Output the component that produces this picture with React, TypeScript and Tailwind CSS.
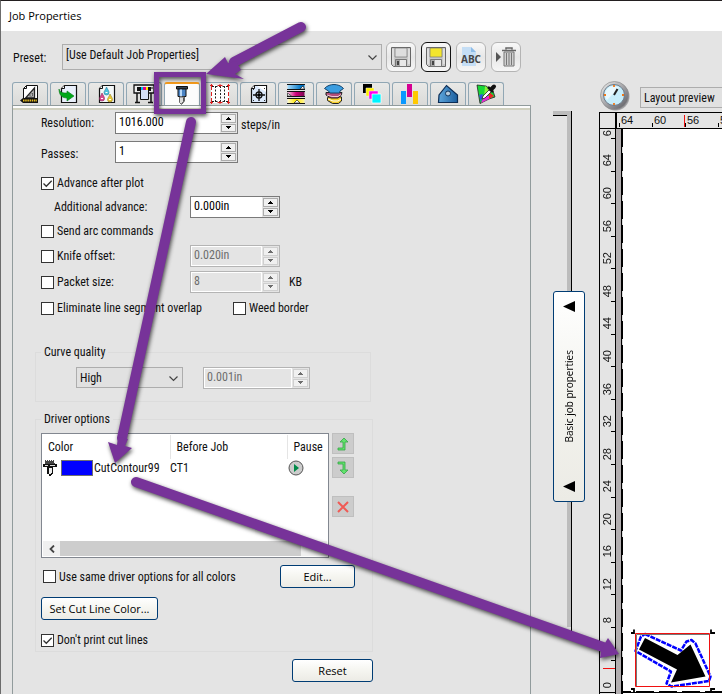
import { ReactNode, useState } from 'react';
import clsx from 'clsx';

const RULER_LEFT = ['64', '60', '56', '52', '48', '44', '40', '36', '32', '28', '24', '20', '16', '12', '8', '4', '0'];
const RULER_TOP = ['64', '60', '56', '52'];

interface SpinBoxProps {
  id: string;
  label?: string;
  defaultValue: string;
  disabled?: boolean;
  className?: string;
}

function SpinBox({ id, label, defaultValue, disabled = false, className }: SpinBoxProps) {
  const arrow = clsx(
    'flex flex-1 items-center justify-center border bg-[#f0f0f0]',
    disabled ? 'border-[#cfcfcf] text-[#6d6d6d]' : 'border-[#acacac] text-black'
  );

  return (
    <div
      className={clsx(
        'flex h-[22px] shrink-0 border',
        disabled ? 'border-[#b4b4b4] bg-[#e4e4e4]' : 'border-[#7a7a7a] bg-white',
        className
      )}
    >
      <input
        id={id}
        aria-label={label}
        defaultValue={defaultValue}
        disabled={disabled}
        className={clsx('min-w-0 flex-1 pb-[2px] outline-none', disabled ? 'border border-white pl-[2px] text-[#6d6d6d]' : 'pl-[3px] text-black')}
      />
      <div className="flex w-[17px] flex-col gap-px bg-[#e4e4e4] p-px">
        <button type="button" aria-label="Increase" disabled={disabled} className={arrow}>
          <svg viewBox="0 0 5 3" className="h-[3px] w-[5px]" shapeRendering="crispEdges" fill="currentColor">
            <path d="M2 0h1v1h1v1h1v1H0V2h1V1h1z" />
          </svg>
        </button>
        <button type="button" aria-label="Decrease" disabled={disabled} className={arrow}>
          <svg viewBox="0 0 5 3" className="h-[3px] w-[5px]" shapeRendering="crispEdges" fill="currentColor">
            <path d="M0 0h5v1H4v1H3v1H2V2H1V1H0z" />
          </svg>
        </button>
      </div>
    </div>
  );
}

interface CheckProps {
  label: string;
  defaultChecked?: boolean;
  className?: string;
}

function Check({ label, defaultChecked = false, className }: CheckProps) {
  return (
    <label className={clsx('flex items-center gap-[3px] whitespace-nowrap', className)}>
      <span className="relative h-[13px] w-[13px]">
        <input
          type="checkbox"
          defaultChecked={defaultChecked}
          className="peer block h-[13px] w-[13px] appearance-none border border-[#333] bg-white"
        />
        <svg
          viewBox="0 0 13 13"
          className="pointer-events-none absolute inset-0 hidden h-[13px] w-[13px] peer-checked:block"
          fill="none"
          stroke="#333"
          strokeWidth="1.3"
        >
          <path d="M2.5 6.5l2.8 2.8 5.4-5.6" />
        </svg>
      </span>
      {label}
    </label>
  );
}

interface DropDownProps {
  id: string;
  label?: string;
  value: string;
  className?: string;
}

function DropDown({ id, label, value, className }: DropDownProps) {
  return (
    <div className={clsx('relative border border-[#adadad] bg-[#e1e1e1]', className)}>
      <select id={id} aria-label={label} defaultValue={value} className="h-full w-full appearance-none pl-[3px] pr-5 outline-none">
        <option>{value}</option>
      </select>
      <svg viewBox="0 0 9 6" className="pointer-events-none absolute top-1/2 right-1 -mt-[2px] h-[6px] w-[9px]" fill="none" stroke="#444" strokeWidth="1.2">
        <path d="M.5.5l4 4 4-4" />
      </svg>
    </div>
  );
}

function PushButton({ children, className }: { children: ReactNode; className?: string }) {
  return (
    <button
      type="button"
      className={clsx(
        "rounded-[3px] border border-[#003c74] bg-gradient-to-b from-white via-[#f5f5f0] to-[#ecebe5] font-['Open_Sans','Noto_Sans',sans-serif] text-[11px] whitespace-nowrap text-black",
        className
      )}
    >
      {children}
    </button>
  );
}

function FloppyIcon({ color }: { color: string }) {
  return (
    <svg viewBox="0 0 20 20" className="h-5 w-5">
      <path d="M.5.5h19v19h-17l-2-2z" fill="#c9c9c9" stroke="#666" />
      <path d="M4 1h12v9H4z" fill={color} stroke="#777" strokeWidth=".7" />
      <path d="M4.5 12.5h11v7h-11z" fill="#a9a9a9" stroke="#777" />
      <path d="M9 13h6v6H9z" fill="#e8e8e8" />
      <path d="M6 14h2v4H6z" fill="#444" />
      <path d="M2 2v15M18 2v15" stroke="#f4f4f4" />
    </svg>
  );
}

// sheet with a folded top left corner, shared by several tabs
function Sheet({ fill = '#fff' }: { fill?: string }) {
  return (
    <>
      <path d="M6.5 1.5h12v17h-15v-14z" fill={fill} stroke="#111" strokeWidth="1.2" />
      <path d="M6.5 1.5v3h-3" fill="#fff" stroke="#111" />
    </>
  );
}

const TABS: { name: string; icon: ReactNode }[] = [
  {
    name: 'Job size',
    icon: (
      <>
        <path d="M6.5 1.5h11v14h-14v-11z" fill="#fff" stroke="#111" />
        <path d="M6.5 1.5v3h-3" fill="none" stroke="#111" />
        <path d="M14.5 4v10h-9z" fill="#bbb" stroke="#222" strokeWidth="1.3" />
        <path d="M12.5 9v3h-3z" fill="#fff" stroke="#333" strokeWidth=".7" />
        <path d="M0 16.5l3-2.5h15v5H3z" fill="#111" />
        <path d="M3 16.5h14" stroke="#e8bc20" strokeWidth="2" strokeDasharray="1.5 .7" />
      </>
    ),
  },
  {
    name: 'Workflow',
    icon: (
      <>
        <Sheet fill="#e9f0fb" />
        <path d="M1 5c1 4 5 4 8 4V7l7 5-7 5v-3c-5 0-8-3-8-9z" fill="#00a818" stroke="#087818" strokeWidth=".6" />
      </>
    ),
  },
  {
    name: 'Color management',
    icon: (
      <>
        <Sheet fill="#f4f8f8" />
        <path d="M10.500 3C12 6 13 7 13 8.500a2.500 2.500 0 0 1-5 0C8 7 9.500 6 10.500 3z" fill="#4bc1dd" stroke="#277b98" strokeWidth=".6" />
        <path d="M6 9c1.500 3 2.500 4 2.500 5.500a2.500 2.500 0 0 1-5 0C3.500 13 5 12 6 9z" fill="#db4a8e" stroke="#83245b" strokeWidth=".6" />
        <path d="M14 10c1.500 3 2.500 4 2.500 5.500a2.500 2.500 0 0 1-5 0C11.500 14 13 13 14 10z" fill="#e8c933" stroke="#94802c" strokeWidth=".6" />
        <path d="M9.500 8h2v1h-2zM5 14h2v1H5zM13 15h2v1h-2z" fill="#fff" />
      </>
    ),
  },
  {
    name: 'Printer',
    icon: (
      <>
        <path d="M0 1h20v8H0z" fill="#eee" stroke="#111" strokeWidth="1.3" />
        <path d="M3 9v9M1 18.500h5M17 9v9M14 18.500h5" stroke="#111" strokeWidth="1.5" />
        <path d="M3 3h14v4H3z" fill="#111" />
        <path d="M6.500 5h8v10.500h-8z" fill="#d4dff5" stroke="#111" />
        <path d="M7 3h2v3H7z" fill="#00bfef" />
        <path d="M9 3h3v3H9z" fill="#e0008c" />
        <path d="M12 3h2v3h-2z" fill="#ffe600" />
        <path d="M18 3v2" stroke="#111" />
      </>
    ),
  },
  {
    name: 'Cutter',
    icon: (
      <>
        <path d="M4.500 1.500h11v2.500h-11z" fill="#345" stroke="#111" />
        <path d="M6 4h8v7.500H6z" fill="#4b84c4" stroke="#111" />
        <path d="M8 4.500h2v7H8z" fill="#bad9f6" />
        <path d="M7.500 12h5v4l-3 3.500-2-2z" fill="#ddd" stroke="#666" />
        <path d="M11.500 12.500v4l-2 2.500" stroke="#555" fill="none" />
      </>
    ),
  },
  {
    name: 'Tiling',
    icon: (
      <>
        <path d="M1 1h18v18H1z" fill="#fff" />
        <path d="M5.500 2v16M10.500 2v16M14.500 2v16M2 2.500h16M2 17.500h16" stroke="#222" strokeDasharray="2 1.500" fill="none" />
        <path
          d="M0 1.500h3M1.500 0v6M1.500 8v4M1.500 14v6M17 1.500h3M18.500 0v6M18.500 8v4M18.500 14v6M0 18.500h3M17 18.500h3M7.500 1.500h5M7.500 18.500h5M10 0v3M10 17v3"
          stroke="#e02020"
          fill="none"
        />
      </>
    ),
  },
  {
    name: 'Registration marks',
    icon: (
      <>
        <Sheet fill="#dbe9fb" />
        <path d="M9 2h9v6z" fill="#fff" />
        <circle cx="11" cy="11" r="3" fill="none" stroke="#111" strokeWidth="1.3" />
        <path d="M11 5v12M5 11h12" stroke="#111" strokeWidth="1.300" />
        <circle cx="11" cy="11" r="1.500" />
        <path d="M5 5.500h1M16 4.500h1M5 16.500h1M16 16.500h1" stroke="#333" />
      </>
    ),
  },
  {
    name: 'Color adjustment',
    icon: (
      <>
        <path d="M1.500 1h17v4.500h-17z" fill="url(#toneCyan)" />
        <path d="M1.500 8h17v4.500h-17z" fill="url(#toneMagenta)" />
        <path d="M1.500 15h17v4.500h-17z" fill="url(#toneYellow)" />
        <path d="M1 .5h18M1 5.500h18M1 7.500h18M1 12.500h18M1 14.500h18M1 19.500h18" stroke="#111" />
        <path d="M14 5l3-3 1.500 3zM1.500 12V9l4 3zM8 19l3-3 3 3z" fill="#fff" stroke="#222" strokeWidth=".7" />
      </>
    ),
  },
  {
    name: 'Layers',
    icon: (
      <>
        <path d="M3.500 13.500v3l5 3h6l3-2.500v-4l-9-1z" fill="#f5cd28" stroke="#222" />
        <path d="M4 15l5 2h5l3-2" fill="none" stroke="#fff" />
        <path d="M2 8.500v2.500l5 3h7l3-2.500 1-3z" fill="#b34e78" stroke="#222" />
        <path d="M3 11l5 1.500h6l3-2" fill="none" stroke="#eec8d6" />
        <path d="M.5 4.500C3 1.500 7 .5 10 .5s7 1 9.500 4L16 7l-.5 2H6L4.500 7z" fill="#3b9de0" stroke="#154268" />
      </>
    ),
  },
  {
    name: 'Separations',
    icon: (
      <>
        <path d="M1 0h9v9H1z" fill="#000" />
        <path d="M4 4h8v8H4z" fill="#ffef00" stroke="#eee" strokeWidth=".5" />
        <path d="M7 7h9v8H7z" fill="#ff00f0" stroke="#eee" strokeWidth=".5" />
        <path d="M10 10h9v9h-9z" fill="#00f4ff" stroke="#fff" strokeWidth=".7" />
      </>
    ),
  },
  {
    name: 'Ink levels',
    icon: (
      <>
        <path d="M1 7h5v13H1z" fill="#0a98ff" />
        <path d="M7 0h5v13H7z" fill="#d60093" />
        <path d="M13 7h5v13h-5z" fill="#ffc800" />
      </>
    ),
  },
  {
    name: 'Finishing',
    icon: (
      <>
        <path d="M.5 18.500L1 11l7.500-9.500 11 9.500v7.500z" fill="url(#tag)" stroke="#0c2d55" strokeWidth="1.200" />
        <circle cx="10" cy="9.500" r="2.500" fill="#b6ccde" stroke="#12365f" />
      </>
    ),
  },
  {
    name: 'Color picker',
    icon: (
      <>
        <path d="M1 1l9 1 7 5 2 6-6 2-9 4.500z" fill="#18d838" stroke="#222" strokeWidth=".8" />
        <path d="M9 2l6 4-7 8z" fill="#8af23a" />
        <path d="M3 11l4-1-2 8z" fill="#2e50e8" />
        <path d="M8 12l9 0-4 3-8 4z" fill="#e628d2" />
        <path d="M13 8l5 4-5 3z" fill="#ef2525" />
        <path d="M6 15l1-3 7-7 2 2-7 7z" fill="#fff" stroke="#222" strokeWidth=".8" />
        <path d="M12 3l5 5" stroke="#111" strokeWidth="2.500" />
        <path d="M15 5.500l3-3" stroke="#111" strokeWidth="4" strokeLinecap="round" />
      </>
    ),
  },
];

function Toolbar() {
  const button = 'flex h-[30px] w-[30px] items-center justify-center rounded-[6px] bg-gradient-to-b from-[#f8f8f8] via-[#e7e7e7] to-[#f6f6f6] border';

  return (
    <div className="flex items-center pt-[11px]">
      <label htmlFor="preset" className="w-[49px] pt-[2px] pl-[13px]">Preset:</label>
      <DropDown id="preset" value="[Use Default Job Properties]" className="ml-[13px] h-[26px] w-[320px] pb-1" />
      <div className="ml-1 flex gap-[5px]">
        <button type="button" aria-label="Save preset" className={clsx(button, 'border-[#b4b4b4]')}>
          <FloppyIcon color="#dedede" />
        </button>
        <button type="button" aria-label="Save preset as" className={clsx(button, 'border-[#111]')}>
          <FloppyIcon color="#f3e52d" />
        </button>
        <button type="button" aria-label="Rename preset" className={clsx(button, 'border-[#b4b4b4]')}>
          <svg viewBox="0 0 20 20" className="h-5 w-5 overflow-visible">
            <path d="M1 0h9l5 5v14H1z" fill="#c5def5" />
            <path d="M10 0v5h5z" fill="#8dbce8" />
            <text x="10" y="16" textAnchor="middle" fontSize="10" fontWeight="700" fontFamily="Open Sans, sans-serif" fill="#454545">ABC</text>
          </svg>
        </button>
        <button type="button" aria-label="Delete preset" className={clsx(button, 'border-[#b4b4b4]')}>
          <svg viewBox="0 0 22 20" className="h-5 w-[22px]">
            <path d="M1 5l5 5-5 5z" fill="#555" />
            <path d="M9 5h10v14H9z" fill="#d0d0d0" stroke="#777" />
            <path d="M7 3.500h14M11 2.500V1h6v1.500" stroke="#666" strokeWidth="1.500" fill="none" />
            <path d="M11.500 6v12M14 6v12M16.500 6v12" stroke="#777" />
          </svg>
        </button>
      </div>
    </div>
  );
}

function TabStrip({ active, onSelect }: { active: number; onSelect: (index: number) => void }) {
  return (
    <div role="tablist" className="mt-[10px] ml-3 flex gap-[2px]">
      {TABS.map((tab, index) => (
        <button
          key={tab.name}
          type="button"
          role="tab"
          aria-label={tab.name}
          aria-selected={index === active}
          onClick={() => onSelect(index)}
          className={clsx(
            'flex h-[23px] w-9 items-center justify-center rounded-t-[3px] border border-b-0',
            index === active
              ? 'border-[#91a7b4] border-t-2 border-t-[#f49b1c] bg-[#fcfcfc]'
              : 'border-[#91a7b4] bg-gradient-to-b from-[#e9e9e7] to-[#dadad8]'
          )}
        >
          <svg viewBox="0 0 20 20" className="h-5 w-5 shrink-0 overflow-visible">{tab.icon}</svg>
        </button>
      ))}
    </div>
  );
}

function GradientDefs() {
  return (
    <svg aria-hidden="true" className="absolute h-0 w-0">
      <defs>
        <linearGradient id="toneCyan">
          <stop offset="0" stopColor="#a9dcfa" />
          <stop offset=".8" stopColor="#0074c4" />
        </linearGradient>
        <linearGradient id="toneMagenta">
          <stop offset="0" stopColor="#f6cce2" />
          <stop offset=".5" stopColor="#d0007c" />
          <stop offset="1" stopColor="#7b0650" />
        </linearGradient>
        <linearGradient id="toneYellow">
          <stop offset="0" stopColor="#fffbd0" />
          <stop offset=".5" stopColor="#ffe600" />
          <stop offset="1" stopColor="#fff59a" />
        </linearGradient>
        <linearGradient id="tag">
          <stop offset="0" stopColor="#5ea6dc" />
          <stop offset="1" stopColor="#1c5f9e" />
        </linearGradient>
        <linearGradient id="rim" x1="0" y1="0" x2="1" y2="1">
          <stop offset="0" stopColor="#f2f2f2" />
          <stop offset="1" stopColor="#55555c" />
        </linearGradient>
      </defs>
    </svg>
  );
}

function ColorList() {
  return (
    <div className="flex h-[125px] w-[288px] flex-col border border-[#828790] bg-white p-px">
      <table className="w-full table-fixed text-left">
        <thead>
          <tr className="h-6">
            <th className="w-[127px] pl-[5px] font-normal">Color</th>
            <th className="w-[117px] border-l border-[#e5e5e5] pl-[6px] font-normal">Before Job</th>
            <th className="border-l border-[#e5e5e5] pl-[6px] font-normal">Pause</th>
          </tr>
        </thead>
        <tbody>
          <tr className="h-[17px]">
            <td>
              <span className="flex items-center whitespace-nowrap">
                <svg viewBox="0 0 14 16" className="h-4 w-[14px]" shapeRendering="crispEdges">
                  <path d="M2 0h1v1h1V0h1v1h1V0h1v1h1V0h1v1h1V0h1v3h1v2H2z" fill="#444" />
                  <path d="M0 4h14v3H0z" fill="#111" />
                  <path d="M2 5h3v1H2zM7 5h5v1H7z" fill="#ddd" />
                  <path d="M4 7h6v6l-3 3H6v-2H4z" fill="#111" />
                  <path d="M6 8h3v4l-2 2H6z" fill="#eee" />
                </svg>
                <span className="ml-[4px] h-4 w-8 border border-[#707070] bg-[#0000ff]" />
                <span className="ml-px">CutContour99</span>
              </span>
            </td>
            <td>CT1</td>
            <td className="pl-px">
              <svg viewBox="0 0 16 16" className="h-4 w-4">
                <circle cx="8" cy="8" r="7" fill="#ccc" stroke="#555" />
                <path d="M6 4l5 4-5 4z" fill="#008a48" />
              </svg>
            </td>
          </tr>
        </tbody>
      </table>
      <div className="mt-auto flex h-[15px] bg-[#f0f0f0]">
        <button type="button" aria-label="Scroll left" className="flex w-[17px] items-center justify-center">
          <svg viewBox="0 0 6 8" className="h-2 w-[6px]" fill="none" stroke="#444" strokeWidth="1.800">
            <path d="M5 .5L1.500 4 5 7.500" />
          </svg>
        </button>
        <div className="w-[241px] bg-[#cdcdcd]" />
      </div>
    </div>
  );
}

function DriverOptions() {
  const side = 'flex h-[21px] w-[22px] items-center justify-center border border-[#bfbfbf] bg-[#cccccc]';
  const turn = 'M1 11h5V5H3l4-4 4 4H8v8H1z';

  return (
    <fieldset className="mt-[9px] w-[338px] border border-[#dcdcdc] pb-px">
      <legend className="ml-[5px] px-[3px] leading-4">Driver options</legend>
      <div className="flex gap-[3px] pt-[6px] pl-[5px]">
        <ColorList />
        <div className="flex flex-col gap-[3px]">
          <button type="button" aria-label="Move up" className={side}>
            <svg viewBox="0 0 12 14" className="h-[14px] w-3">
              <path d={turn} fill="#62e36c" stroke="#35a548" strokeWidth=".8" />
            </svg>
          </button>
          <button type="button" aria-label="Move down" className={side}>
            <svg viewBox="0 0 12 14" className="h-[14px] w-3 -scale-y-100">
              <path d={turn} fill="#62e36c" stroke="#35a548" strokeWidth=".8" />
            </svg>
          </button>
          <button type="button" aria-label="Remove" className={clsx(side, 'mt-[15px]')}>
            <svg viewBox="0 0 12 12" className="h-3 w-3">
              <path d="M1 1l10 10M11 1L1 11" stroke="#f05a55" strokeWidth="2" />
            </svg>
          </button>
        </div>
      </div>
      <div className="mt-[7px] flex h-[23px] items-center justify-between pr-[17px] pl-[7px]">
        <Check label="Use same driver options for all colors" />
        <PushButton className="h-[23px] w-[75px]">Edit...</PushButton>
      </div>
      <PushButton className="mt-[9px] ml-[5px] block h-[23px] w-[117px]">Set Cut Line Color...</PushButton>
      <Check label="Don't print cut lines" defaultChecked className="mt-[10px] h-5 pl-[5px]" />
    </fieldset>
  );
}

function CutterPanel() {
  return (
    <div role="tabpanel" className="ml-3 flex-1 border-x border-t border-[#919b9c]">
      <div className="border-t-2 border-b-2 border-t-[#fcfcfc] border-b-[#d0d0bf]" />
      <form className="pl-[22px]" onSubmit={(e) => e.preventDefault()}>
        <div className="flex flex-col pt-[2px] pl-[6px]">
          <div className="flex h-[22px] items-center">
            <label htmlFor="resolution" className="w-[74px]">Resolution:</label>
            <SpinBox id="resolution" defaultValue="1016.000" className="w-[123px]" />
            <span className="pt-1 pl-[3px]">steps/in</span>
          </div>
          <div className="mt-[7px] flex h-[22px] items-center">
            <label htmlFor="passes" className="w-[74px] pt-1">Passes:</label>
            <SpinBox id="passes" defaultValue="1" className="w-[123px]" />
          </div>
          <Check label="Advance after plot" defaultChecked className="mt-2 h-6" />
          <div className="flex h-6 items-center">
            <label htmlFor="advance" className="w-[149px] pl-[13px]">Additional advance:</label>
            <SpinBox id="advance" defaultValue="0.000in" className="w-[90px]" />
          </div>
          <Check label="Send arc commands" className="h-6" />
          <div className="flex h-[26px] items-center">
            <Check label="Knife offset:" className="w-[149px]" />
            <SpinBox id="knife" label="Knife offset" defaultValue="0.020in" disabled className="w-[90px]" />
          </div>
          <div className="flex h-[26px] items-center">
            <Check label="Packet size:" className="w-[149px]" />
            <SpinBox id="packet" label="Packet size" defaultValue="8" disabled className="w-[90px]" />
            <span className="pl-[9px]">KB</span>
          </div>
          <div className="flex h-[26px] items-center">
            <Check label="Eliminate line segment overlap" className="w-[192px]" />
            <Check label="Weed border" />
          </div>
        </div>

        <fieldset className="mt-[23px] w-[336px] border border-[#dcdcdc] pb-3">
          <legend className="ml-[5px] px-[3px] leading-4">Curve quality</legend>
          <div className="flex gap-5 pt-[7px] pl-10">
            <DropDown id="quality" label="Curve quality" value="High" className="h-[21px] w-[107px]" />
            <SpinBox id="tolerance" label="Curve tolerance" defaultValue="0.001in" disabled className="w-[107px]" />
          </div>
        </fieldset>

        <DriverOptions />

        <div className="mt-[7px] flex w-[338px] justify-end">
          <PushButton className="h-[23px] w-[81px]">Reset</PushButton>
        </div>
      </form>
    </div>
  );
}

function Splitter() {
  return (
    <div className="relative mt-[80px] ml-[22px] mb-[62px] w-[32px] shrink-0">
      <div className="mr-[13px] flex h-full flex-col border-r border-b border-black pb-1">
        <div className="h-[5px] shrink-0 border-b border-black bg-[#bcbcbc]" />
        <div className="-mt-px ml-auto w-1 flex-1 bg-[#bcbcbc]" />
      </div>
      <button
        type="button"
        className="absolute top-[180px] left-0 flex h-[211px] w-8 flex-col items-center justify-between rounded-[3px] border border-[#003c74] bg-gradient-to-b from-white via-[#f3f3ee] to-[#ecebe5] py-[9px] text-black"
      >
        <svg viewBox="0 0 12 11" className="h-[11px] w-3"><path d="M0 5.500L12 0v11z" /></svg>
        <span className="rotate-180 font-['Open_Sans','Noto_Sans',sans-serif] text-[10px] leading-3 [writing-mode:vertical-rl]">Basic job properties</span>
        <svg viewBox="0 0 12 11" className="h-[11px] w-3"><path d="M0 5.500L12 0v11z" /></svg>
      </button>
    </div>
  );
}

function TimerIcon() {
  return (
    <svg viewBox="0 0 30 30" className="h-[30px] w-[30px] shrink-0">
      <circle cx="15.500" cy="15.500" r="14" fill="#77777c" opacity=".6" />
      <circle cx="14.500" cy="14.500" r="14" fill="url(#rim)" stroke="#8c8c8c" strokeWidth=".7" />
      <circle cx="14" cy="14" r="10.500" fill="#c8eefb" stroke="#6d7a88" />
      <path d="M5 14a9 9 0 0 1 14-7.500L7 19a9 9 0 0 1-2-5z" fill="#fff" opacity=".6" />
      <path d="M14 4v2M14 22v2M4 14h2M22 14h2" stroke="#f07818" strokeWidth="1.800" />
      <path d="M14 14l3.500-6" stroke="#222" strokeWidth="2" />
    </svg>
  );
}

function Preview() {
  return (
    <div className="ml-[14px] flex min-w-0 flex-1 flex-col pt-[50px]">
      <div className="flex items-end gap-[10px] pl-px">
        <TimerIcon />
        <DropDown id="view" label="View" value="Layout preview" className="mb-[3px] h-[21px] w-[150px] shrink-0" />
      </div>
      <div className="mt-px flex h-[17px] border-y border-l border-black">
        <div className="w-[17px] shrink-0 border-r-2 border-black" />
        <div className="flex overflow-hidden pl-[2px]">
          {RULER_TOP.map((mark) => (
            <div key={mark} className="relative w-[33px] shrink-0 pl-[2px] font-['Liberation_Sans',sans-serif] text-[11px] leading-[15px]">
              <span className="absolute bottom-px left-0 h-1 w-px bg-black" />
              {mark === '56' && <span className="absolute bottom-px -left-px h-3 w-px bg-[#f01010]" />}
              {mark}
            </div>
          ))}
        </div>
      </div>
      <div className="flex min-h-0 flex-1">
        <div className="flex w-[17px] shrink-0 flex-col border-x border-black pb-px font-['Liberation_Sans',sans-serif] text-[11px]">
          <div className="flex h-[9px] shrink-0 items-center justify-center">
            <span className="rotate-180 leading-[13px] [writing-mode:vertical-rl]">6</span>
          </div>
          {RULER_LEFT.map((mark) => (
            <div key={mark} className="relative flex min-h-0 flex-1 items-end justify-center pb-1 last:border-b last:border-black">
              <span className="absolute top-0 right-0 h-px w-1 bg-black" />
              <span className={clsx('rotate-180 leading-[13px] [writing-mode:vertical-rl]', mark === '4' && 'invisible')}>{mark}</span>
              {mark === '0' && <span className="absolute top-[8px] right-0 h-px w-3 bg-[#f01010]" />}
            </div>
          ))}
        </div>
        <div className="w-[5px] shrink-0 bg-[#b2aeb0]" />
        <div className="relative min-w-0 flex-1 border-l-2 border-black bg-white">
          <div className="absolute top-0 bottom-0 -left-px w-px bg-[repeating-linear-gradient(to_bottom,transparent_0_18px,#ddd_18px_24px)]" />
          <svg viewBox="0 0 99 66" className="absolute bottom-0 left-0 h-[66px] w-[99px]" fill="none">
            <path d="M0 64h99" stroke="#000" strokeWidth="2" />
            <path d="M8 63.500h91" stroke="#fff" strokeDasharray="5 18" />
            <path
              d="M22 6l36 16.500 5.500-9 5-1.500 4 3.500 15 33-1.500 4.500-37.500 5.500-5-3 4.500-12-35.500-20.500 5.500-14.500z"
              stroke="#00f"
              strokeWidth="2.500"
              strokeDasharray="5 1"
              strokeLinejoin="round"
            />
            <path d="M22 10l32.500 17 13-10.500 15 32L48 54.500l6-13-38-20z" fill="#000" />
            <path d="M13.500 58V6.500h73" stroke="#777" />
            <path d="M12.500 5.500h74v53h-74z" stroke="#f01010" />
            <path d="M8 5h3V1.500M92 5h-4V1.500M8 61h3v4M92 61h-4v4" stroke="#000" strokeWidth="1.800" />
          </svg>
        </div>
      </div>
    </div>
  );
}

function Arrows() {
  return (
    <svg
      viewBox="0 0 722 694"
      aria-hidden="true"
      className="pointer-events-none absolute -top-px -left-px h-[694px] w-[722px] drop-shadow-[1px_2px_2px_rgba(0,0,0,0.7)]"
      fill="none"
      stroke="#773399"
    >
      <path d="M156.500 74.500h47v37h-47z" strokeWidth="5" />
      <g strokeWidth="10" strokeLinecap="round">
        <path d="M301 27L234 62M191 122L122 438M136 482L603 647" />
      </g>
      <g fill="#773399" stroke="none">
        <path d="M206 74l19-17 3 6 8-2 5 9-6 4 9 5z" />
        <path d="M115 463l-7-21 9 3 1-8 10 2-3 7 7 2z" />
        <path d="M619 654l-11-16-3 5-4 8-1 7z" />
      </g>
    </svg>
  );
}

export default function App() {
  const [activeTab, setActiveTab] = useState(4);

  return (
    <div className="relative flex min-h-screen flex-col overflow-hidden border-t border-l border-t-[#231f20] border-l-[#6c6c6c] bg-[#e4e4e4] font-['Roboto_Condensed','Roboto','Liberation_Sans',sans-serif] text-[12px] leading-4 text-[#111]">
      <GradientDefs />
      <header className="flex h-[30px] items-center bg-white pl-2 font-['Open_Sans','Noto_Sans',sans-serif] text-[11px] text-black">
        <h1>Job Properties</h1>
      </header>
      <div className="flex flex-1">
        <div className="-ml-px flex w-[531px] shrink-0 flex-col">
          <Toolbar />
          <TabStrip active={activeTab} onSelect={setActiveTab} />
          <CutterPanel />
        </div>
        <Splitter />
        <Preview />
      </div>
      <Arrows />
    </div>
  );
}
